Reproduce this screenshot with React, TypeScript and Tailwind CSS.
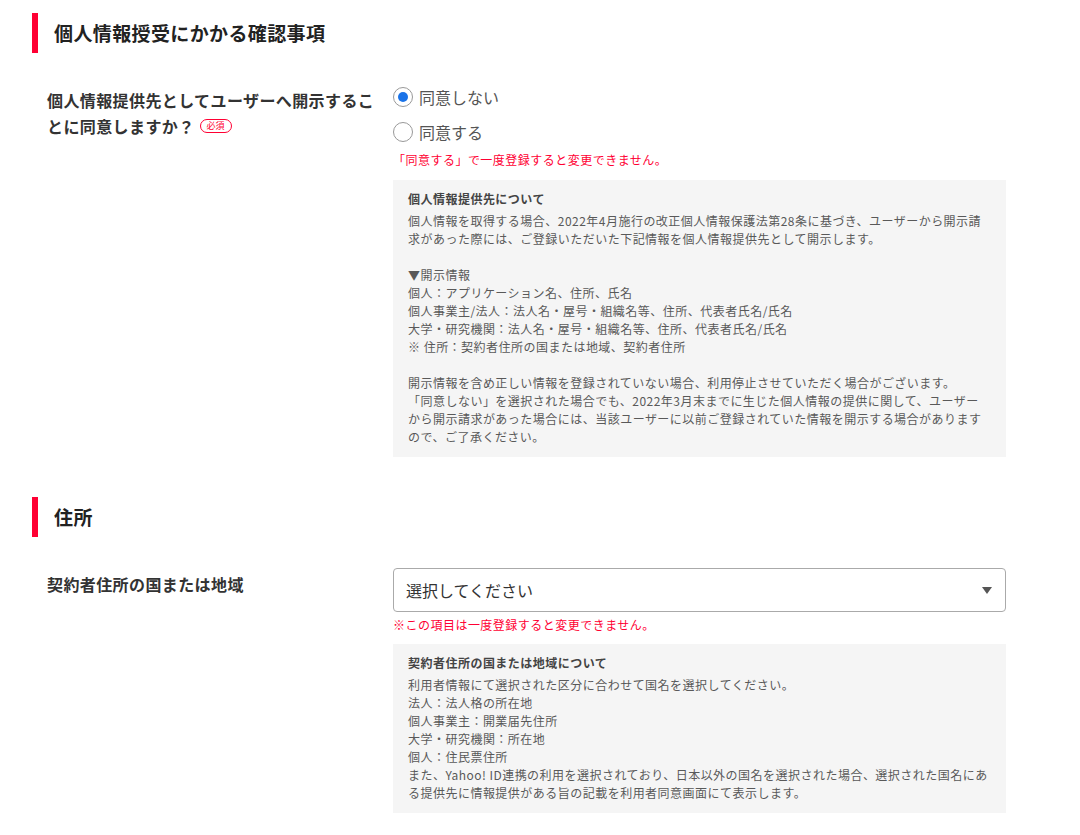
import React from "react";

const disclosureLines: string[] = [
  "個人情報を取得する場合、2022年4月施行の改正個人情報保護法第28条に基づき、ユーザーから開示請",
  "求があった際には、ご登録いただいた下記情報を個人情報提供先として開示します。",
  "",
  "▼開示情報",
  "個人：アプリケーション名、住所、氏名",
  "個人事業主/法人：法人名・屋号・組織名等、住所、代表者氏名/氏名",
  "大学・研究機関：法人名・屋号・組織名等、住所、代表者氏名/氏名",
  "※ 住所：契約者住所の国または地域、契約者住所",
  "",
  "開示情報を含め正しい情報を登録されていない場合、利用停止させていただく場合がございます。",
  "「同意しない」を選択された場合でも、2022年3月末までに生じた個人情報の提供に関して、ユーザー",
  "から開示請求があった場合には、当該ユーザーに以前ご登録されていた情報を開示する場合があります",
  "ので、ご了承ください。",
];

const countryLines: string[] = [
  "利用者情報にて選択された区分に合わせて国名を選択してください。",
  "法人：法人格の所在地",
  "個人事業主：開業届先住所",
  "大学・研究機関：所在地",
  "個人：住民票住所",
  "また、Yahoo! ID連携の利用を選択されており、日本以外の国名を選択された場合、選択された国名にあ",
  "る提供先に情報提供がある旨の記載を利用者同意画面にて表示します。",
];

const SectionHeading: React.FC<{ title: string; className?: string }> = ({ title, className = "" }) => (
  <h2
    className={`flex h-10 items-center border-l-[6px] border-[#ff0033] pl-4 text-[19px] font-bold tracking-[0.02em] text-[#222] ${className}`}
  >
    {title}
  </h2>
);

const InfoBox: React.FC<{ title: string; lines: string[] }> = ({ title, lines }) => (
  <div className="bg-[#f5f5f5] px-[15px] pt-[10px] pb-[11px] text-[12px] leading-[18px] tracking-[0.04em]">
    <p className="font-bold text-[#444]">{title}</p>
    <div className="mt-1 text-[#595959]">
      {lines.map((line, i) =>
        line === "" ? (
          <div key={i} className="h-[18px]" />
        ) : (
          <div key={i} className="whitespace-nowrap">
            {line}
          </div>
        )
      )}
    </div>
  </div>
);

const Radio: React.FC<{ label: string; checked?: boolean }> = ({ label, checked }) => (
  <label className="flex h-6 items-center gap-[6px] text-[16px] text-[#555]">
    <span className="flex h-5 w-5 items-center justify-center rounded-full border border-[#999] bg-white">
      {checked && <span className="h-[10px] w-[10px] rounded-full bg-[#1a73e8]" />}
    </span>
    <span className="leading-6">{label}</span>
  </label>
);

export default function App() {
  return (
    <div className="min-h-screen w-[1080px] bg-white font-['Noto_Sans_CJK_JP','Noto_Sans',sans-serif]">
      <div className="w-[1006px] pl-8 pt-[13px]">
        <SectionHeading title="個人情報授受にかかる確認事項" />

        <div className="mt-[32px] flex">
          <div className="w-[361px] shrink-0 pl-[15px] pr-[16px] pt-[2px] text-[16px] leading-[26px] font-bold tracking-[0.025em] text-[#333]">
            <div>個人情報提供先としてユーザーへ開示するこ</div>
            <div className="flex items-center">
              <span>とに同意しますか？</span>
              <span className="ml-[5px] inline-flex h-[14px] w-[32px] items-center justify-center rounded-full border border-[#ff0033] text-[9px] leading-[12px] font-normal tracking-normal text-[#ff0033]">
                必須
              </span>
            </div>
          </div>
          <div className="w-[613px]">
            <div className="flex flex-col gap-[11px]">
              <Radio label="同意しない" checked />
              <Radio label="同意する" />
            </div>
            <p className="mt-[7px] text-[12px] leading-[18px] tracking-[0.04em] text-[#ff0033]">
              「同意する」で一度登録すると変更できません。
            </p>
            <div className="mt-[11px]">
              <InfoBox title="個人情報提供先について" lines={disclosureLines} />
            </div>
          </div>
        </div>

        <SectionHeading title="住所" className="mt-10" />

        <div className="mt-[31px] flex">
          <div className="w-[361px] shrink-0 pl-[15px] pr-[16px] pt-[3px] text-[16px] leading-[26px] font-bold tracking-[0.025em] text-[#333]">
            契約者住所の国または地域
          </div>
          <div className="w-[613px]">
            <div className="flex h-[44px] items-center justify-between rounded-[4px] border border-[#aaa] bg-white pl-3 pr-[13px] text-[16px] text-[#333]">
              <span>選択してください</span>
              <svg width="10" height="7" viewBox="0 0 10 7" aria-hidden="true">
                <polygon points="0,0 10,0 5,7" fill="#555" />
              </svg>
            </div>
            <p className="mt-1 text-[12px] leading-[18px] tracking-[0.04em] text-[#ff0033]">
              ※この項目は一度登録すると変更できません。
            </p>
            <div className="mt-[10px]">
              <InfoBox title="契約者住所の国または地域について" lines={countryLines} />
            </div>
          </div>
        </div>
      </div>
    </div>
  );
}
